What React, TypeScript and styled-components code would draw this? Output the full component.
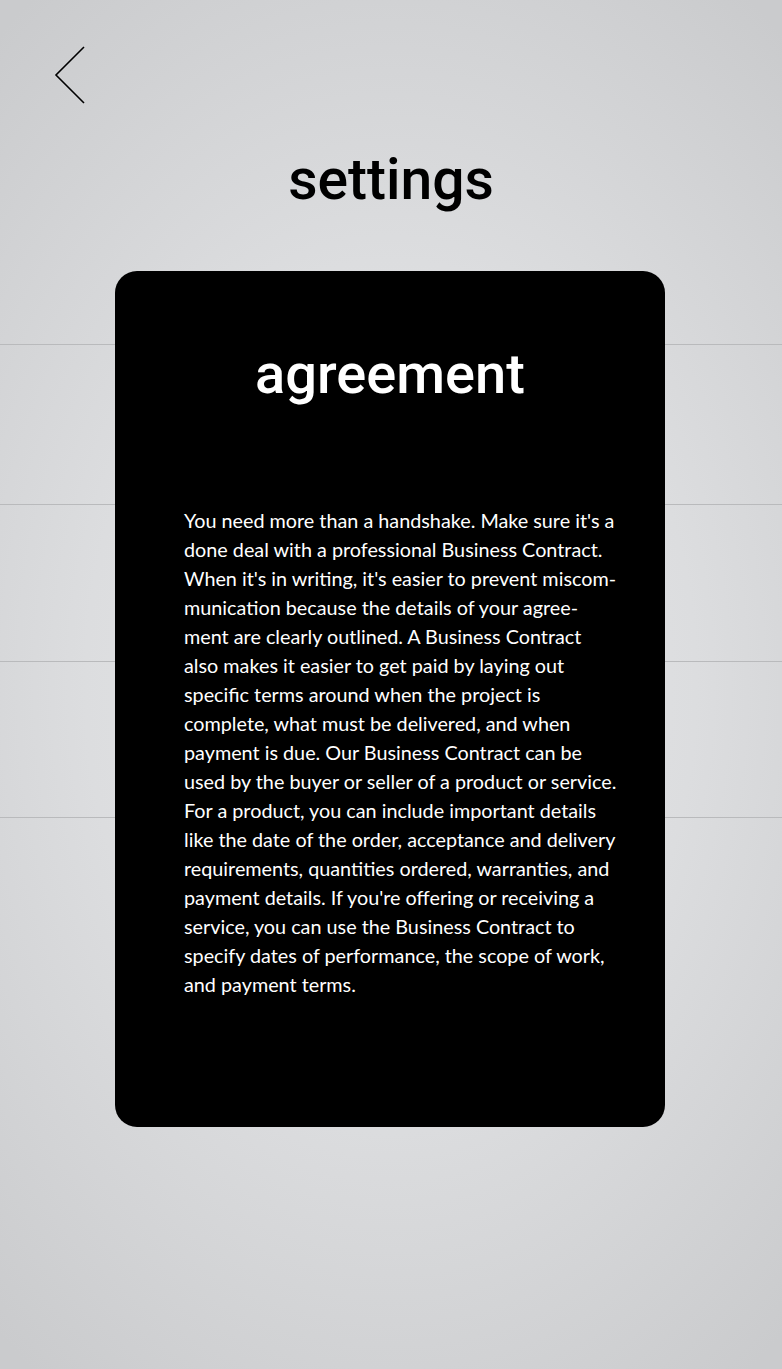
import React from 'react';
import styled, { createGlobalStyle } from 'styled-components';

const GlobalStyles = createGlobalStyle`
  html, body {
    margin: 0;
    padding: 0;
  }
  body {
    font-family: Lato, "Liberation Sans", sans-serif;
  }
`;

const Page = styled.div`
  min-height: 1369px;
  display: flex;
  flex-direction: column;
  background: radial-gradient(ellipse 78% 62% at 50% 50%, #e8e9ea 0%, #dcdddf 50%, #cacbcd 100%);
`;

const Header = styled.header`
  display: flex;
  padding: 45px 0 0 54px;
`;

const BackButton = styled.button`
  width: 32px;
  height: 60px;
  padding: 0;
  border: none;
  background: transparent;
  cursor: pointer;
  display: block;
`;

const Title = styled.h1`
  margin: 46px 0 0;
  text-align: center;
  font-family: Roboto, "Liberation Sans", sans-serif;
  font-weight: 500;
  font-size: 57px;
  line-height: 57px;
  color: #000;
`;

// card sits on top of the list rows; both share one grid cell
const Stage = styled.div`
  display: grid;
  margin-top: 63px;
`;

const Rows = styled.div`
  grid-area: 1 / 1;
  padding-top: 73px;
  display: flex;
  flex-direction: column;
`;

const Row = styled.div<{ $h: number; $last?: boolean }>`
  height: ${(p) => p.$h}px;
  border-top: 1px solid #b9babc;
  border-bottom: ${(p) => (p.$last ? '1px solid #b9babc' : 'none')};
  box-sizing: border-box;
`;

const Card = styled.section`
  grid-area: 1 / 1;
  justify-self: center;
  position: relative;
  z-index: 1;
  width: 550px;
  height: 856px;
  margin-right: 2px;
  box-sizing: border-box;
  background: #000;
  border-radius: 22px;
  padding: 75px 0 0 69px;
  color: #fff;
`;

const CardTitle = styled.h2`
  margin: 0 0 0 -69px;
  text-align: center;
  font-family: Roboto, "Liberation Sans", sans-serif;
  font-weight: 500;
  font-size: 56px;
  line-height: 56px;
`;

const Body = styled.div`
  margin-top: 104px;
  font-family: Lato, "Liberation Sans", sans-serif;
  font-size: 19.8px;
  line-height: 29px;
`;

const Line = styled.div`
  white-space: nowrap;
`;

const text = [
  "You need more than a handshake. Make sure it's a",
  'done deal with a professional Business Contract.',
  "When it's in writing, it's easier to prevent miscom-",
  'munication because the details of your agree-',
  'ment are clearly outlined. A Business Contract',
  'also makes it easier to get paid by laying out',
  'specific terms around when the project is',
  'complete, what must be delivered, and when',
  'payment is due. Our Business Contract can be',
  'used by the buyer or seller of a product or service.',
  'For a product, you can include important details',
  'like the date of the order, acceptance and delivery',
  'requirements, quantities ordered, warranties, and',
  "payment details. If you're offering or receiving a",
  'service, you can use the Business Contract to',
  'specify dates of performance, the scope of work,',
  'and payment terms.',
];

export default function App() {
  return (
    <>
      <GlobalStyles />
      <Page>
        <Header>
          <BackButton aria-label="back">
            <svg width="32" height="60" viewBox="0 0 32 60">
              <path d="M30 2 L2 30 L30 58" fill="none" stroke="#000" strokeWidth="1.6" />
            </svg>
          </BackButton>
        </Header>
        <Title>settings</Title>
        <Stage>
          <Rows>
            <Row $h={160} />
            <Row $h={157} />
            <Row $h={157} $last />
          </Rows>
          <Card>
            <CardTitle>agreement</CardTitle>
            <Body>
              {text.map((l, i) => (
                <Line key={i}>{l}</Line>
              ))}
            </Body>
          </Card>
        </Stage>
      </Page>
    </>
  );
}
